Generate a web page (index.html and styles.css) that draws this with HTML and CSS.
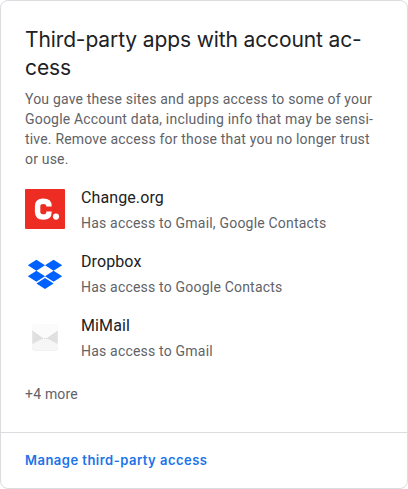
FILE: index.html
```html
<!DOCTYPE html>
<html lang="en">
<head>
<meta charset="utf-8">
<title>Third-party apps</title>
<link rel="stylesheet" href="styles.css">
</head>
<body>
<article class="card">
  <div class="content">
    <h2 class="title">Third-party apps with account ac-<br>cess</h2>
    <p class="intro">You gave these sites and apps access to some of your<br>Google Account data, including info that may be sensi-<br>tive. Remove access for those that you no longer trust<br>or use.</p>
    <ul class="apps">
      <li class="app">
        <svg class="icon" viewBox="0 0 40 40"><rect width="40" height="40" rx="1" fill="#ed2d24"/><path d="M24 17.6V17Q24 12.3 18.2 12.3Q12.6 12.3 12.6 17.4V22.8Q12.6 28 18.2 28Q24 28 24 23.2V22.6" fill="none" stroke="#fff" stroke-width="5.4"/><circle cx="31" cy="27.6" r="3.1" fill="#fff"/></svg>
        <div class="details"><h3 class="name">Change.org</h3><p class="access">Has access to Gmail, Google Contacts</p></div>
      </li>
      <li class="app">
        <svg class="icon" viewBox="0 0 40 40"><path fill="#0061ff" d="M11.4 6.8L20 12.3L11.4 17.8L2.8 12.3ZM28.6 6.8L37.2 12.3L28.6 17.8L20 12.3ZM11.4 17.8L20 23.3L11.4 28.8L2.8 23.3ZM28.6 17.8L37.2 23.3L28.6 28.8L20 23.3ZM20 25L28.6 30.5L20 36L11.4 30.5Z"/></svg>
        <div class="details"><h3 class="name">Dropbox</h3><p class="access">Has access to Google Contacts</p></div>
      </li>
      <li class="app">
        <svg class="icon" viewBox="0 0 40 40"><rect x="7" y="7.6" width="26" height="26" rx="3" fill="#e4e4e4"/><rect x="7" y="7" width="26" height="26" rx="3" fill="#f6f6f6"/><path d="M7.3 14V10Q7.3 7.2 10 7.2H30Q32.7 7.2 32.7 10V14L22 21.5H18Z" fill="#fbfbfb"/><path d="M7.3 14L18 21.5L7.3 27ZM32.7 14L22 21.5L32.7 27Z" fill="#e0e0e0"/><path d="M7.3 14L18 21.5H22L32.7 14" fill="none" stroke="#ccc" stroke-width=".8" stroke-dasharray="1 1"/></svg>
        <div class="details"><h3 class="name">MiMail</h3><p class="access">Has access to Gmail</p></div>
      </li>
    </ul>
    <p class="more">+4 more</p>
  </div>
  <footer class="footer"><a class="link">Manage third-party access</a></footer>
</article>
</body>
</html>
```
FILE: styles.css
```css
* { box-sizing: border-box; margin: 0; padding: 0; }
body { background: #fff; font-family: Roboto, sans-serif; color: #202124; }
.card { width: 408px; height: 489px; border: 1px solid #dadce0; border-radius: 8px; background: #fff; display: flex; flex-direction: column; }
.content { flex: 1; padding: 25px 24px 0; white-space: nowrap; }
.title { font: 400 21px/28px Inter, sans-serif; letter-spacing: -0.12px; }
.intro { margin-top: 7px; font-size: 14px; line-height: 20px; letter-spacing: 0.19px; color: #5f6368; }
.apps { list-style: none; margin-top: 17px; }
.app { display: flex; gap: 16px; height: 64px; padding-top: 3px; }
.icon { width: 40px; height: 40px; flex: none; }
.name { font-size: 16px; line-height: 24px; font-weight: 400; letter-spacing: 0.1px; margin-top: -3px; }
.access { margin-top: 3px; font-size: 14px; line-height: 20px; letter-spacing: 0.2px; color: #5f6368; }
.more { margin-top: 6px; font-size: 14px; line-height: 20px; letter-spacing: 0.2px; color: #5f6368; }
.footer { height: 56px; border-top: 1px solid #dadce0; padding: 0 24px 2px; display: flex; align-items: center; }
.link { font: 600 13px/20px Inter, sans-serif; letter-spacing: 0.48px; color: #1a73e8; white-space: nowrap; }
```
